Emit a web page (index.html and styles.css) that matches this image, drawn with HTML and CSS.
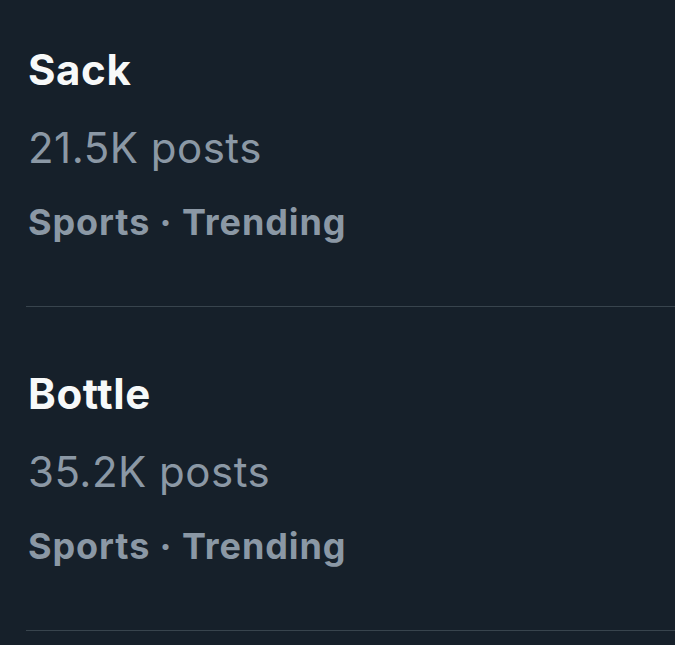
FILE: index.html
```html
<!DOCTYPE html>
<html>
<head>
<meta charset="utf-8">
<link rel="stylesheet" href="styles.css">
</head>
<body>
<div class="list">
  <div class="trend">
    <div class="title">Sack</div>
    <div class="count">21.5K posts</div>
    <div class="meta">Sports · Trending</div>
  </div>
  <div class="trend">
    <div class="title">Bottle</div>
    <div class="count">35.2K posts</div>
    <div class="meta">Sports · Trending</div>
  </div>
</div>
</body>
</html>
```
FILE: styles.css
```css
html, body {
  margin: 0;
  padding: 0;
  background: #16202a;
}
body {
  font-family: Inter, "Noto Sans", sans-serif;
  width: 675px;
  height: 645px;
  overflow: hidden;
}
.list {
  display: flex;
  flex-direction: column;
}
.trend {
  box-sizing: border-box;
  margin-left: 26px;
  padding: 62px 0 0 2px;
  height: 324px;
  border-bottom: 1px solid #38444d;
  display: flex;
  flex-direction: column;
}
.trend:first-child {
  height: 307px;
  padding-top: 45px;
}
.title {
  color: #f7f9f9;
  font-weight: 700;
  font-size: 42px;
  line-height: 50px;
  letter-spacing: 0.6px;
}
.count {
  color: #8b98a5;
  font-size: 42px;
  line-height: 50px;
  letter-spacing: 0.5px;
  margin-top: 28px;
}
.meta {
  color: #8b98a5;
  font-weight: 700;
  font-size: 36px;
  line-height: 50px;
  letter-spacing: 0.9px;
  margin-top: 24px;
}
```
